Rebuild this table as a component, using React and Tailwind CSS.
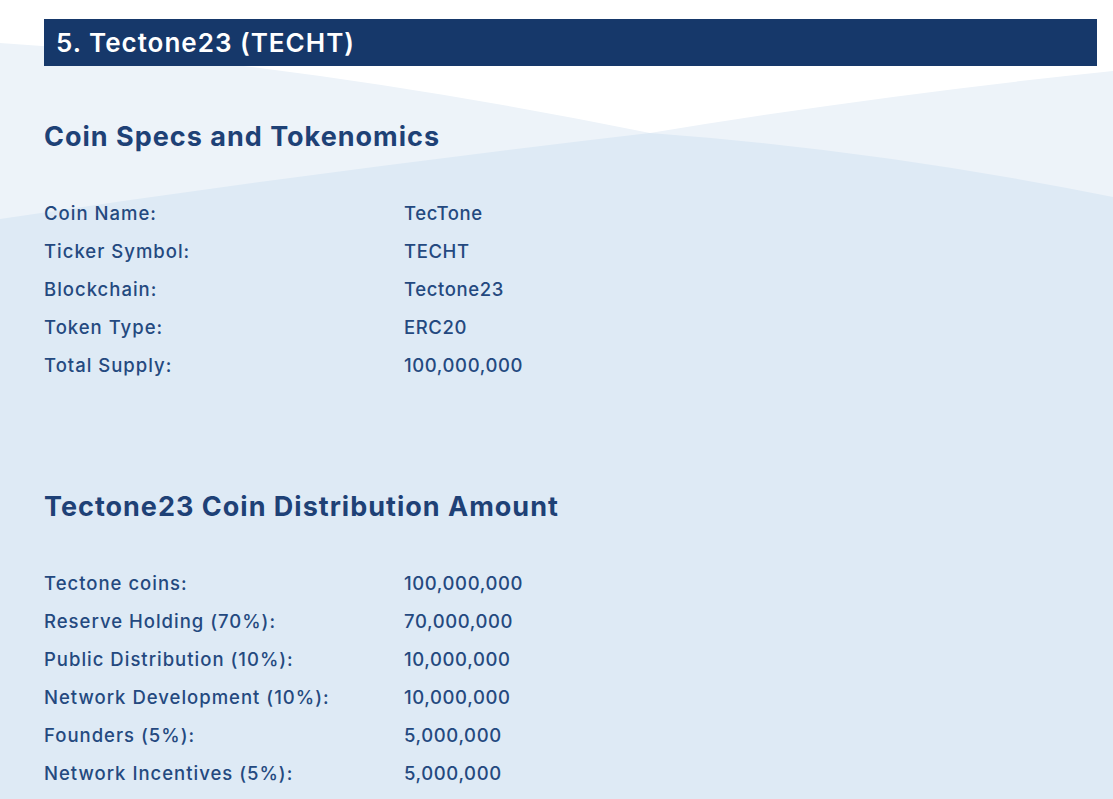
const specs = [
  ["Coin Name:", "TecTone"],
  ["Ticker Symbol:", "TECHT"],
  ["Blockchain:", "Tectone23"],
  ["Token Type:", "ERC20"],
  ["Total Supply:", "100,000,000"],
];

const distribution = [
  ["Tectone coins:", "100,000,000"],
  ["Reserve Holding (70%):", "70,000,000"],
  ["Public Distribution (10%):", "10,000,000"],
  ["Network Development (10%):", "10,000,000"],
  ["Founders (5%):", "5,000,000"],
  ["Network Incentives (5%):", "5,000,000"],
];

const Rows = ({ items }) => (
  <div className="flex flex-col">
    {items.map(([label, value]) => (
      <div key={label} className="flex h-[38px] items-center text-[18.5px] font-medium text-[#24497f]">
        <span className="w-[360px] tracking-[1px]">{label}</span>
        <span className="tracking-[0.6px]">{value}</span>
      </div>
    ))}
  </div>
);

const Backdrop = () => (
  <svg className="absolute inset-0 w-full h-full" viewBox="0 0 1113 799" preserveAspectRatio="none">
    <path d="M0 43 Q300 62 650 133 Q880 95 1113 71 L1113 799 L0 799 Z" fill="#edf3f9" />
    <path d="M0 219 Q330 170 650 133 Q880 150 1113 197 L1113 799 L0 799 Z" fill="#deeaf5" />
  </svg>
);

export default function App() {
  return (
    <div className="relative w-[1113px] h-[799px] overflow-hidden bg-white" style={{ fontFamily: "Inter, 'Noto Sans', sans-serif" }}>
      <Backdrop />
      <div className="relative pl-[44px] pr-[16px] pt-[19px]">
        <div className="h-[47px] bg-[#16386a] flex items-center pl-3">
          <h1 className="text-[26px] tracking-[1px] font-semibold text-white">5. Tectone23 (TECHT)</h1>
        </div>

        <h2 className="mt-[55px] text-[27px] tracking-[1px] leading-[31px] font-bold text-[#1e4176]">Coin Specs and Tokenomics</h2>
        <div className="mt-[43px]">
          <Rows items={specs} />
        </div>

        <h2 className="mt-[106px] text-[27px] tracking-[1px] leading-[31px] font-bold text-[#1e4176]">Tectone23 Coin Distribution Amount</h2>
        <div className="mt-[43px]">
          <Rows items={distribution} />
        </div>
      </div>
    </div>
  );
}
